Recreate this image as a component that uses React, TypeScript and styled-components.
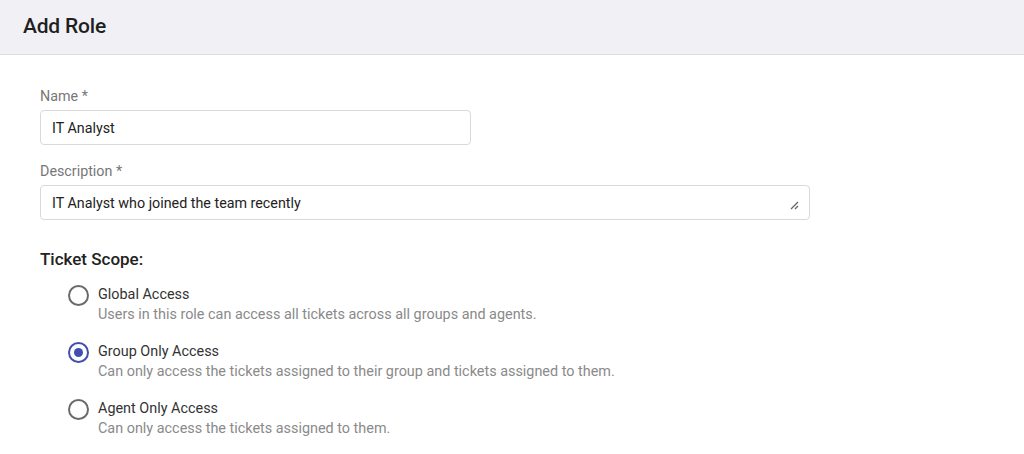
import styled, { createGlobalStyle } from 'styled-components';

const GlobalStyle = createGlobalStyle`
  html, body {
    margin: 0;
    padding: 0;
    background: #ffffff;
    font-family: Roboto, 'Liberation Sans', sans-serif;
  }
  * { box-sizing: border-box; }
`;

const Page = styled.div`
  width: 1024px;
  min-height: 454px;
  background: #fff;
`;

const Header = styled.div`
  height: 55px;
  background: #f1f1f5;
  border-bottom: 1px solid #dcdce0;
  display: flex;
  align-items: center;
  padding: 0 23px 2px;
`;

const Title = styled.h1`
  margin: 0;
  font-size: 21px;
  font-weight: 500;
  color: #1f1f1f;
  letter-spacing: -0.2px;
`;

const Form = styled.div`
  padding: 33px 40px 0;
  display: flex;
  flex-direction: column;
`;

const Field = styled.div`
  display: flex;
  flex-direction: column;
  gap: 5px;
  margin-bottom: 18px;
`;

const Label = styled.label`
  font-size: 14.3px;
  color: #777;
  line-height: 17px;
`;

const Input = styled.div<{ $width: number }>`
  width: ${(p) => p.$width}px;
  height: 35px;
  border: 1px solid #d9d9d9;
  border-radius: 4px;
  display: flex;
  align-items: center;
  padding: 0 11px;
  font-size: 14.3px;
  color: #222;
  position: relative;
`;

const Grip = styled.svg`
  position: absolute;
  right: 10px;
  bottom: 9px;
`;

const SectionTitle = styled.h2`
  margin: 10px 0 16px;
  font-size: 17px;
  font-weight: 500;
  color: #222;
  line-height: 22px;
`;

const Options = styled.div`
  display: flex;
  flex-direction: column;
  gap: 20px;
  padding-left: 28px;
`;

const Option = styled.div`
  display: flex;
  gap: 9px;
`;

const Radio = styled.span<{ $checked?: boolean }>`
  width: 21px;
  height: 21px;
  border-radius: 50%;
  border: 2px solid ${(p) => (p.$checked ? '#3f4fb0' : '#6a6a6a')};
  display: flex;
  align-items: center;
  justify-content: center;
  flex-shrink: 0;
  margin-top: -1px;
  &::after {
    content: '';
    display: ${(p) => (p.$checked ? 'block' : 'none')};
    width: 9px;
    height: 9px;
    border-radius: 50%;
    background: #3f4fb0;
  }
`;

const OptionText = styled.div`
  display: flex;
  flex-direction: column;
  gap: 3px;
`;

const OptionLabel = styled.span`
  font-size: 14.4px;
  color: #333;
  line-height: 17px;
`;

const OptionHint = styled.span`
  font-size: 14.4px;
  color: #8a8a8a;
  line-height: 17px;
`;

const options = [
  {
    label: 'Global Access',
    hint: 'Users in this role can access all tickets across all groups and agents.',
  },
  {
    label: 'Group Only Access',
    hint: 'Can only access the tickets assigned to their group and tickets assigned to them.',
    checked: true,
  },
  {
    label: 'Agent Only Access',
    hint: 'Can only access the tickets assigned to them.',
  },
];

export default function App() {
  return (
    <Page>
      <GlobalStyle />
      <Header>
        <Title>Add Role</Title>
      </Header>
      <Form>
        <Field>
          <Label>Name *</Label>
          <Input $width={431}>IT Analyst</Input>
        </Field>
        <Field>
          <Label>Description *</Label>
          <Input $width={770}>
            IT Analyst who joined the team recently
            <Grip width="9" height="9" viewBox="0 0 9 9">
              <path d="M8 1 L1 8 M8 5 L5 8" stroke="#666" strokeWidth="1.3" />
            </Grip>
          </Input>
        </Field>
        <SectionTitle>Ticket Scope:</SectionTitle>
        <Options>
          {options.map((o) => (
            <Option key={o.label}>
              <Radio $checked={o.checked} />
              <OptionText>
                <OptionLabel>{o.label}</OptionLabel>
                <OptionHint>{o.hint}</OptionHint>
              </OptionText>
            </Option>
          ))}
        </Options>
      </Form>
    </Page>
  );
}
